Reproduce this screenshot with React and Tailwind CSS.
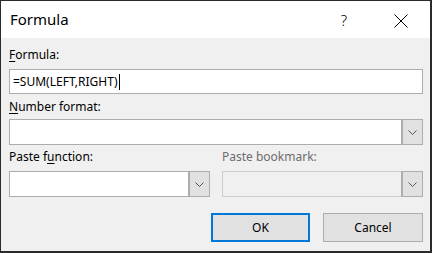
import React from "react";

const font = { fontFamily: '"Segoe UI", "Noto Sans", sans-serif' };

const Chevron = () => (
  <svg width="9" height="5" viewBox="0 0 9 5" fill="none">
    <path d="M0.5 0.5 L4.5 4.5 L8.5 0.5" stroke="#555" strokeWidth="1" />
  </svg>
);

const Combo = ({ disabled }) => (
  <div
    className={`flex h-[26px] border ${
      disabled ? "border-[#cccccc] bg-[#f0f0f0]" : "border-[#adadad] bg-white"
    }`}
  >
    <div className="flex-1" />
    <div className="w-[20px] bg-[#e1e1e1] border-l border-[#adadad] outline outline-1 outline-[#adadad] -outline-offset-0 flex items-center justify-center">
      <Chevron />
    </div>
  </div>
);

export default function App() {
  return (
    <div
      className="w-[432px] h-[253px] border-l border-t border-r-2 border-b-2 border-[#2b2b2b] bg-[#f0f0f0] flex flex-col text-black"
      style={font}
    >
      <div className="h-[37px] bg-white flex items-start">
        <div className="pl-[9px] pt-[8px] text-[15px] leading-[20px]">Formula</div>
        <div className="ml-auto mt-[9px] w-[12px] text-center text-[15px] leading-[20px] font-light">
          ?
        </div>
        <div className="ml-[44px] mr-[22px] mt-[13px]">
          <svg width="14" height="14" viewBox="0 0 14 14">
            <path d="M0.5 0.5 L13.5 13.5 M13.5 0.5 L0.5 13.5" stroke="#000" strokeWidth="1" />
          </svg>
        </div>
      </div>

      <div className="flex-1 flex flex-col pl-[8px] pr-[7px] pt-[9px] text-[12px] leading-[16px]">
        <div>
          <u className="underline-offset-[2px]">F</u>ormula:
        </div>
        <div className="mt-[6px] h-[25px] border border-[#adadad] bg-white flex items-center pl-[3px]">
          <span>=SUM(LEFT,RIGHT)</span>
          <span className="ml-px w-px h-[16px] bg-black" />
        </div>

        <div className="mt-[5px]">
          <u className="underline-offset-[2px]">N</u>umber format:
        </div>
        <div className="mt-[4px]">
          <Combo />
        </div>

        <div className="mt-[4px] grid grid-cols-2 gap-x-[12px]">
          <div>
            <div>
              Paste f<u className="underline-offset-[2px]">u</u>nction:
            </div>
            <div className="mt-[6px]">
              <Combo />
            </div>
          </div>
          <div>
            <div className="text-[#6d6d6d]">Paste bookmark:</div>
            <div className="mt-[6px]">
              <Combo disabled />
            </div>
          </div>
        </div>

        <div className="mt-[16px] flex justify-end gap-[13px]">
          <button className="w-[99px] h-[29px] border-2 border-[#0078d7] bg-[#e1e1e1] text-[12px]">
            OK
          </button>
          <button className="w-[100px] h-[29px] border border-[#adadad] bg-[#e1e1e1] text-[12px]">
            Cancel
          </button>
        </div>
      </div>
    </div>
  );
}
